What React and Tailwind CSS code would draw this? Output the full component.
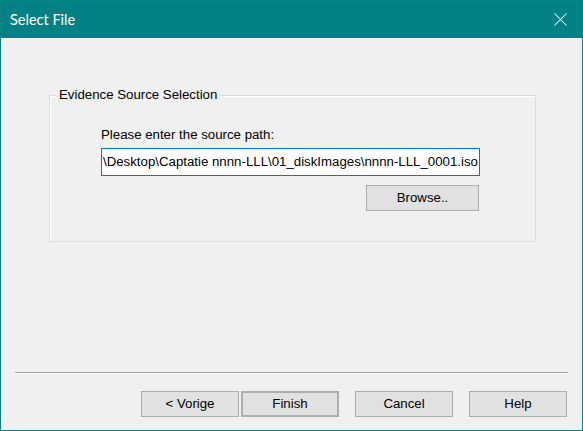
import { X } from "lucide-react";

const btn =
  "h-[26px] w-[98px] bg-[#e1e1e1] border border-[#adadad] text-[13.25px] text-black flex items-center justify-center";

export default function App() {
  return (
    <div
      className="w-[583px] h-[431px] border border-[#058385] flex flex-col bg-[#f0f0f0]"
      style={{ fontFamily: '"Liberation Sans", Arial, sans-serif' }}
    >
      {/* title bar */}
      <div className="h-[37px] bg-[#048184] flex items-center justify-between pl-[9px] pr-[10px] shrink-0">
        <span
          className="text-white text-[14.5px]"
          style={{ fontFamily: 'Lato, "Noto Sans", sans-serif' }}
        >
          Select File
        </span>
        <X size={23} strokeWidth={1.05} className="text-white" />
      </div>

      {/* body */}
      <div className="flex-1 flex flex-col">
        {/* group box */}
        <div className="relative ml-[48px] mt-[57px] w-[487px] h-[147px] border border-[#dcdcdc] shadow-[inset_1px_1px_0_#ffffff] pl-[51px] pt-[31px]">
          <span className="absolute left-[6px] top-[-9px] bg-[#f0f0f0] px-[3px] text-[13.25px] leading-[16px] text-black">
            Evidence Source Selection
          </span>
          <div className="w-[379px] flex flex-col">
            <div className="text-[13.25px] leading-[15px] text-black">
              Please enter the source path:
            </div>
            <div className="mt-[6px] h-[28px] bg-white border border-[#0078d7] flex items-center pl-[1px] overflow-hidden whitespace-nowrap text-[13.25px] text-black">
              \Desktop\Captatie nnnn-LLL\01_diskImages\nnnn-LLL_0001.iso
            </div>
            <button className={btn + " self-end mr-[1px] mt-[9px] w-[113px]"}>
              Browse..
            </button>
          </div>
        </div>

        {/* separator */}
        <div className="ml-[14px] mt-[130px] w-[553px] border-t border-[#a0a0a0] border-b border-b-white" />

        {/* buttons */}
        <div className="flex ml-[140px] mt-[17px]">
          <button className={btn}>&lt; Vorige</button>
          <button className={btn + " ml-[2px] border-2 border-[#0078d7]"}>Finish</button>
          <button className={btn + " ml-[16px]"}>Cancel</button>
          <button className={btn + " ml-[16px]"}>Help</button>
        </div>
      </div>
    </div>
  );
}
